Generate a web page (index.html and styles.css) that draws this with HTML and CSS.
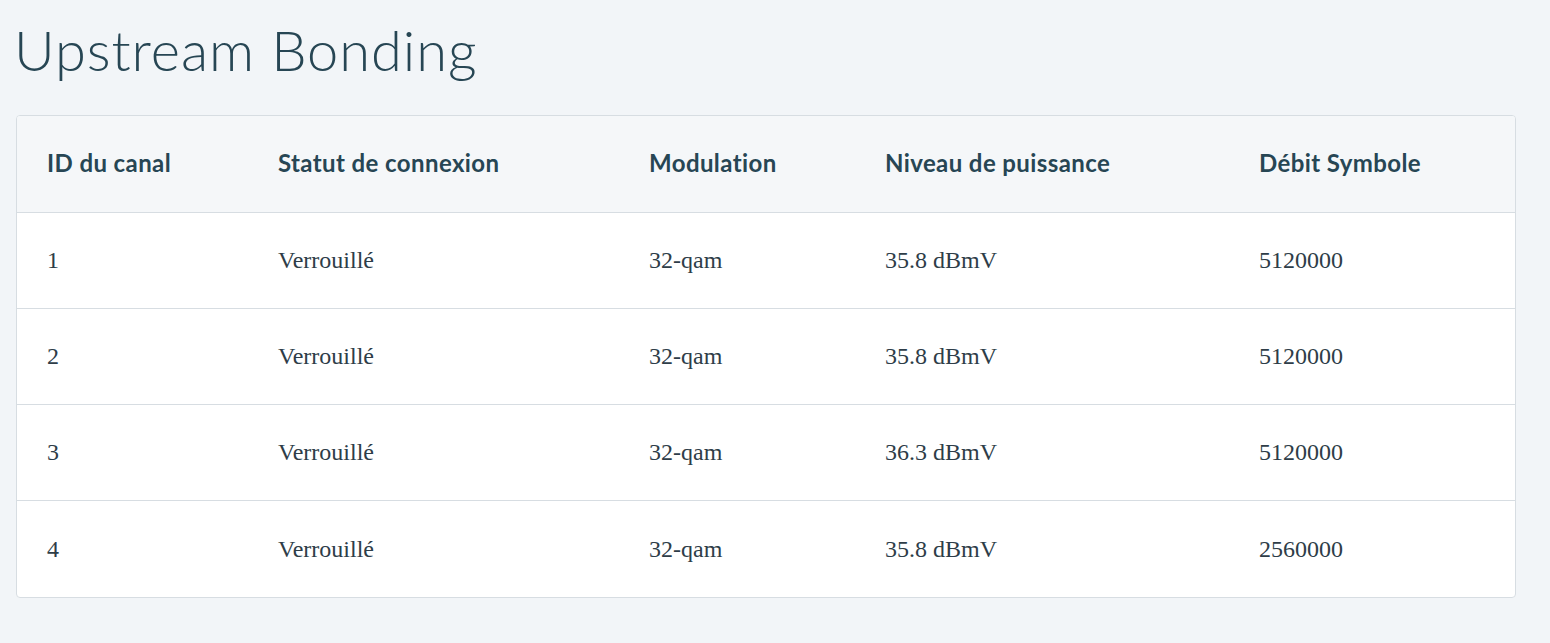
FILE: index.html
```html
<!DOCTYPE html>
<html lang="fr">
<head>
<meta charset="utf-8">
<title>Upstream Bonding</title>
<link rel="stylesheet" href="styles.css">
</head>
<body>
<main class="page">
  <h1 class="title">Upstream Bonding</h1>
  <div class="card">
    <table class="grid">
      <colgroup>
        <col class="c1"><col class="c2"><col class="c3"><col class="c4"><col class="c5">
      </colgroup>
      <thead>
        <tr>
          <th>ID du canal</th>
          <th>Statut de connexion</th>
          <th>Modulation</th>
          <th>Niveau de puissance</th>
          <th>Débit Symbole</th>
        </tr>
      </thead>
      <tbody>
        <tr><td>1</td><td>Verrouillé</td><td>32-qam</td><td>35.8 dBmV</td><td>5120000</td></tr>
        <tr><td>2</td><td>Verrouillé</td><td>32-qam</td><td>35.8 dBmV</td><td>5120000</td></tr>
        <tr><td>3</td><td>Verrouillé</td><td>32-qam</td><td>36.3 dBmV</td><td>5120000</td></tr>
        <tr class="last"><td>4</td><td>Verrouillé</td><td>32-qam</td><td>35.8 dBmV</td><td>2560000</td></tr>
      </tbody>
    </table>
  </div>
</main>
</body>
</html>
```
FILE: styles.css
```css
html, body {
  margin: 0;
  padding: 0;
  background: #f2f5f8;
}
.page {
  padding: 16px 34px 0 16px;
}
.title {
  margin: 0 0 31px -2px;
  font-family: "Lato", "Open Sans", sans-serif;
  font-weight: 300;
  font-size: 56px;
  line-height: 68px;
  color: #274654;
  letter-spacing: 0.95px;
}
.card {
  background: #ffffff;
  border: 1px solid #d7dde2;
  border-radius: 4px;
  overflow: hidden;
}
.grid {
  width: 100%;
  border-collapse: collapse;
  table-layout: fixed;
}
.c1 { width: 231px; }
.c2 { width: 371px; }
.c3 { width: 236px; }
.c4 { width: 374px; }
.grid th {
  background: #f5f7f9;
  text-align: left;
  font-family: "Lato", "Open Sans", sans-serif;
  font-weight: 700;
  font-size: 24px;
  letter-spacing: 0.4px;
  color: #274654;
  height: 92px;
  padding: 0 0 4px 30px;
  border-bottom: 1px solid #d7dde2;
}
.grid td {
  font-family: "Liberation Serif", "Times New Roman", serif;
  font-size: 24px;
  color: #2e3d48;
  height: 95px;
  padding: 0 0 0 30px;
  border-bottom: 1px solid #d7dde2;
}
.grid .last td {
  border-bottom: none;
  height: 96px;
}
```
